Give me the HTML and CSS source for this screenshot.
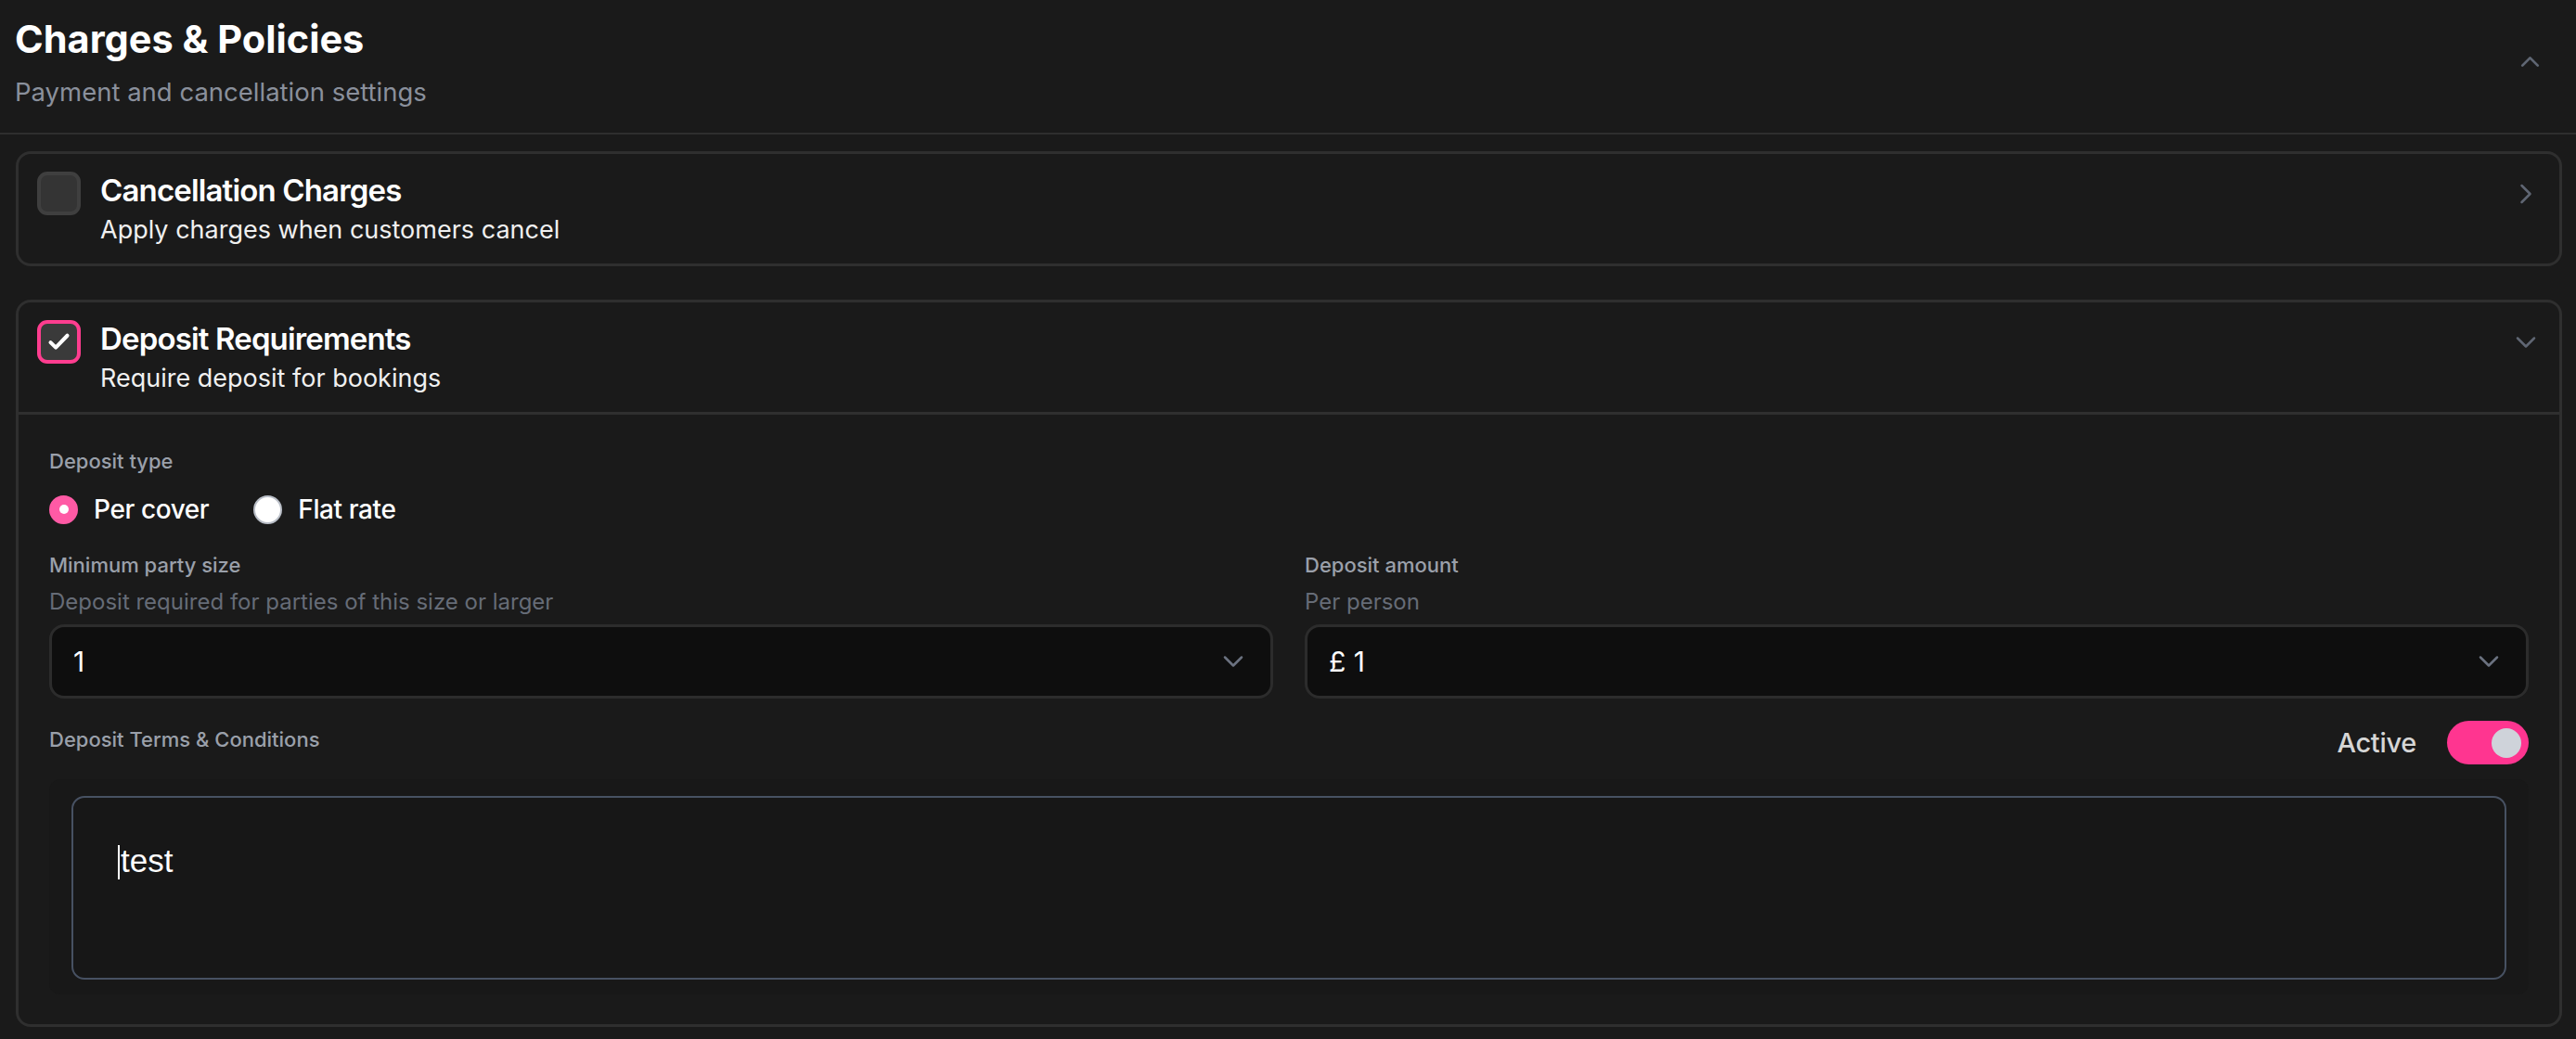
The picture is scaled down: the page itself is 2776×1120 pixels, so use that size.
FILE: index.html
```html
<!DOCTYPE html>
<html lang="en">
<head>
    <meta charset="UTF-8" />
    <meta name="viewport" content="width=device-width, initial-scale=1.0" />
    <title>Charges &amp; Policies</title>
    <link rel="stylesheet" href="styles.css">
</head>
<body>
    <div class="policies">
        <header class="policies-header">
            <div>
                <h1 class="policies-title">Charges &amp; Policies</h1>
                <p class="policies-subtitle">Payment and cancellation settings</p>
            </div>
            <button class="collapse-btn" aria-label="Collapse">
                <svg width="33" height="33" viewBox="0 0 24 24" fill="none" stroke="currentColor" stroke-width="2" stroke-linecap="round" stroke-linejoin="round"><path d="m18 15-6-6-6 6"/></svg>
            </button>
        </header>

        <div class="policy-list">
            <!-- Cancellation charges (collapsed) -->
            <div class="policy-card">
                <div class="policy-head">
                    <span class="checkbox"></span>
                    <div class="policy-text">
                        <h3 class="policy-title">Cancellation Charges</h3>
                        <p class="policy-desc">Apply charges when customers cancel</p>
                    </div>
                    <svg class="chevron" width="36" height="36" viewBox="0 0 24 24" fill="none" stroke="currentColor" stroke-width="1.7" stroke-linecap="round" stroke-linejoin="round"><path d="m9 18 6-6-6-6"/></svg>
                </div>
            </div>

            <!-- Deposit requirements (open) -->
            <div class="policy-card">
                <div class="policy-head open">
                    <span class="checkbox checked">
                        <svg width="27" height="27" viewBox="0 0 24 24" fill="none" stroke="#fff" stroke-width="3.6" stroke-linecap="round" stroke-linejoin="round"><path d="M4 12.5l5 5L20 6"/></svg>
                    </span>
                    <div class="policy-text">
                        <h3 class="policy-title">Deposit Requirements</h3>
                        <p class="policy-desc">Require deposit for bookings</p>
                    </div>
                    <svg class="chevron" width="36" height="36" viewBox="0 0 24 24" fill="none" stroke="currentColor" stroke-width="1.7" stroke-linecap="round" stroke-linejoin="round"><path d="m6 9 6 6 6-6"/></svg>
                </div>

                <div class="policy-body">
                    <div class="field-label">Deposit type</div>
                    <div class="radio-group">
                        <label class="radio-option"><span class="radio selected"></span>Per cover</label>
                        <label class="radio-option"><span class="radio"></span>Flat rate</label>
                    </div>

                    <div class="field-grid">
                        <div class="field">
                            <div class="field-label">Minimum party size</div>
                            <div class="field-hint">Deposit required for parties of this size or larger</div>
                            <div class="select">
                                <span>1</span>
                                <svg width="36" height="36" viewBox="0 0 24 24" fill="none" stroke="currentColor" stroke-width="1.7" stroke-linecap="round" stroke-linejoin="round"><path d="m6 9 6 6 6-6"/></svg>
                            </div>
                        </div>
                        <div class="field">
                            <div class="field-label">Deposit amount</div>
                            <div class="field-hint">Per person</div>
                            <div class="select">
                                <span>£ 1</span>
                                <svg width="36" height="36" viewBox="0 0 24 24" fill="none" stroke="currentColor" stroke-width="1.7" stroke-linecap="round" stroke-linejoin="round"><path d="m6 9 6 6 6-6"/></svg>
                            </div>
                        </div>
                    </div>

                    <div class="terms-row">
                        <div class="field-label terms-label">Deposit Terms &amp; Conditions</div>
                        <div class="toggle-group">
                            <span class="toggle-text">Active</span>
                            <span class="toggle on"><span class="knob"></span></span>
                        </div>
                    </div>

                    <div class="terms-wrap">
                        <div class="terms-box"><span class="caret"></span>test</div>
                    </div>
                </div>
            </div>
        </div>
    </div>
</body>
</html>
```

FILE: styles.css
```css
body {
    margin: 0;
    background: #1a1a1a;
    font-family: Inter, "Noto Sans", sans-serif;
    color: #fff;
}

.policies-header {
    display: flex;
    justify-content: space-between;
    align-items: center;
    padding: 17px 33px 28px 16px;
    border-bottom: 2px solid #2e2e2e;
}

.policies-title {
    margin: 0;
    font-size: 41.5px;
    line-height: 50px;
    font-weight: 700;
}

.policies-subtitle {
    margin: 16px 0 0;
    font-size: 27.5px;
    line-height: 32px;
    color: #8a909c;
}

.collapse-btn {
    background: none;
    border: none;
    padding: 0;
    color: #5f6673;
    display: flex;
}

.policy-list {
    display: flex;
    flex-direction: column;
    gap: 36px;
    padding: 18px 15px 13px 17px;
}

.policy-card {
    border: 3px solid #2f2f2f;
    border-radius: 16px;
}

.policy-head {
    display: flex;
    align-items: flex-start;
    gap: 21px;
    padding: 19px 18px 19px 20px;
}

    .policy-head.open {
        border-bottom: 3px solid #2f2f2f;
    }

.checkbox {
    width: 47px;
    height: 47px;
    box-sizing: border-box;
    border: 4px solid #3f3f3f;
    border-radius: 11px;
    background: #343434;
    display: flex;
    align-items: center;
    justify-content: center;
    flex-shrink: 0;
}

    .checkbox.checked {
        border-color: #ff3d8f;
        background: #3a3a3a;
    }

.policy-title {
    margin: 0;
    font-size: 33px;
    line-height: 40px;
    font-weight: 600;
    letter-spacing: -0.85px;
}

.policy-desc {
    margin: 6px 0 0;
    font-size: 27px;
    line-height: 34px;
    color: #f0f0f0;
}

.chevron {
    margin-left: auto;
    margin-top: 6px;
    color: #5f6673;
    flex-shrink: 0;
}

.policy-body {
    padding: 36px 33px 32px;
}

.field-label {
    font-size: 22px;
    line-height: 28px;
    font-weight: 500;
    color: #9aa0aa;
}

.radio-group {
    display: flex;
    gap: 48px;
    margin-top: 20px;
}

.radio-option {
    display: flex;
    align-items: center;
    gap: 17px;
    font-size: 28px;
    line-height: 36px;
    font-weight: 500;
    letter-spacing: -0.4px;
}

.radio {
    width: 31px;
    height: 31px;
    box-sizing: border-box;
    border-radius: 50%;
    background: #fff;
    border: 2px solid #b9bec7;
    display: flex;
    align-items: center;
    justify-content: center;
}

    .radio.selected {
        background: #ff5aa5;
        border-color: #ff5aa5;
    }

        .radio.selected::after {
            content: "";
            width: 10px;
            height: 10px;
            border-radius: 50%;
            background: #fff;
        }

.field-grid {
    display: grid;
    grid-template-columns: 1fr 1fr;
    column-gap: 34px;
    margin-top: 28px;
}

.field-hint {
    margin-top: 11px;
    font-size: 24px;
    line-height: 30px;
    color: #666c77;
}

.select {
    margin-top: 9px;
    height: 80px;
    box-sizing: border-box;
    border: 3px solid #2c2c2c;
    border-radius: 16px;
    background: #0e0e0e;
    display: flex;
    align-items: center;
    justify-content: space-between;
    padding: 0 22px 0 23px;
    font-size: 30px;
    color: #fff;
}

    .select svg {
        color: #6b7280;
    }

.terms-row {
    display: flex;
    justify-content: space-between;
    align-items: flex-start;
    margin-top: 24px;
}

.terms-label {
    margin-top: 6px;
}

.toggle-group {
    display: flex;
    align-items: center;
    gap: 33px;
}

.toggle-text {
    font-size: 29px;
    line-height: 47px;
    font-weight: 500;
    letter-spacing: -0.3px;
    color: #d6d6d6;
}

.toggle {
    width: 88px;
    height: 47px;
    border-radius: 24px;
    background: #ff3590;
    display: flex;
    align-items: center;
    justify-content: flex-end;
    padding: 0 8px;
    box-sizing: border-box;
}

.knob {
    width: 32px;
    height: 32px;
    border-radius: 50%;
    background: #cfd3da;
}

.terms-wrap {
    margin-top: 16px;
    padding: 18px 24px 16px;
    background: #181818;
    border-radius: 12px;
}

.terms-box {
    height: 198px;
    box-sizing: border-box;
    border: 2px solid #475162;
    border-radius: 14px;
    background: #171717;
    padding: 46px 48px;
    font-family: "Liberation Sans", Arial, sans-serif;
    font-size: 35px;
    line-height: 44px;
    color: #fff;
}

.caret {
    display: inline-block;
    width: 2px;
    height: 37px;
    background: #fff;
    vertical-align: -8px;
    margin-right: 1px;
}
```
